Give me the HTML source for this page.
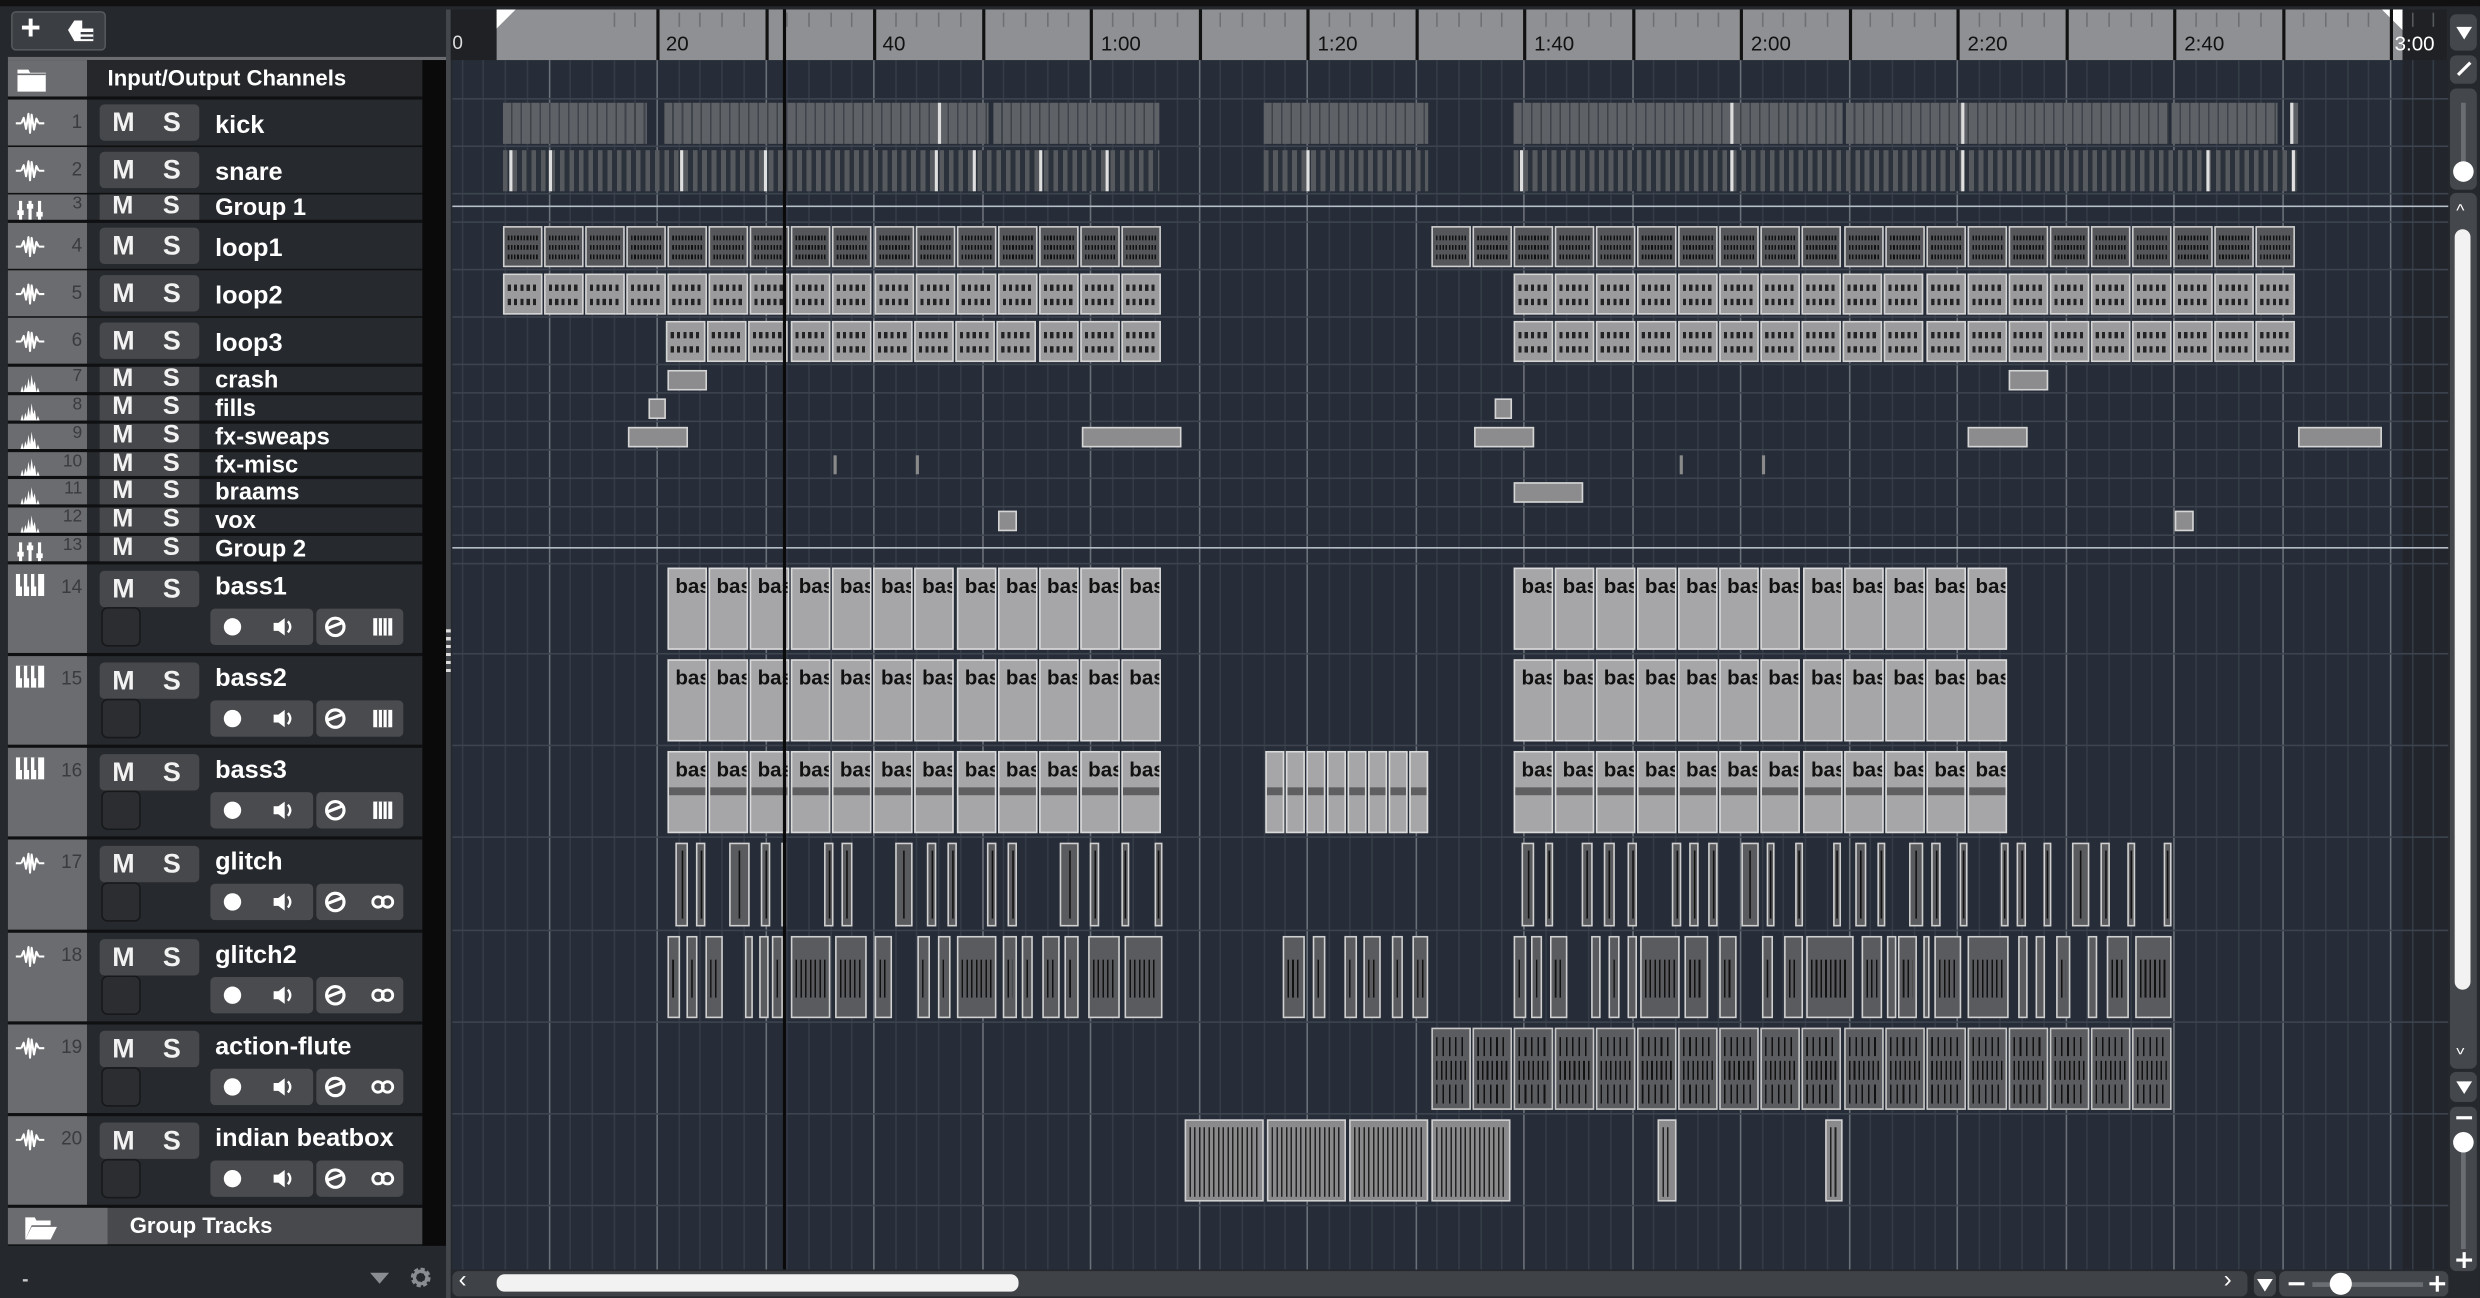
<!DOCTYPE html>
<html><head><meta charset="utf-8">
<style>
html,body{margin:0;padding:0;width:2480px;height:1298px;overflow:hidden;background:#1b1d20}
#s{position:absolute;left:0;top:0;width:1568px;height:821px;transform:scale(1.58163,1.58100);transform-origin:0 0;background:#25282c;font-family:"Liberation Sans",sans-serif;overflow:hidden}
.a{position:absolute}
.row{position:absolute;left:5px;width:262px;background:#26292d}
.row .ic{position:absolute;left:0;top:0;bottom:0;width:50px;background:#6b6c6f}
.row .n{position:absolute;left:0;width:47px;text-align:right;top:7px;font:12px "Liberation Sans",sans-serif;color:#3a3b3e}
.row svg.i{position:absolute;left:4px;top:7px}
.row .ms{position:absolute;left:58px;width:63px;top:3px;height:23px;background:#47484b;border-radius:3px;font:bold 17px "Liberation Sans",sans-serif;color:#f2f2f2}
.ms b{position:absolute;top:2px}.ms b:first-child{left:8px}.ms b+b{left:40px}
.row .nm{position:absolute;left:131px;top:8px;font:bold 16px "Liberation Sans",sans-serif;color:#fff;white-space:nowrap}
.s .ms{top:0;height:16px;font-size:16px;border-radius:0}.s .ms b{top:-1px}
.s .nm{top:0;font-size:15px}.s .n{top:0;font-size:11px}.s svg.i{top:auto;bottom:0}
.B .ms{top:4px}.B .nm{top:6px}
.B .sq{position:absolute;left:59px;top:27px;width:23px;height:23px;border:1px solid #17181a;background:#2b2d31;border-radius:4px}
.B .g1{position:absolute;left:128px;top:28px;width:65px;height:23px;background:#4a4b4e;border-radius:3px}
.B .g2{position:absolute;left:195px;top:28px;width:55px;height:23px;background:#4a4b4e;border-radius:3px}
.g1 svg,.g2 svg{position:absolute;top:4px}
.btn{position:absolute;background:#44474b;border-radius:4px}
</style></head><body>
<div id="s">
<svg width="0" height="0" style="position:absolute">
<defs>
<symbol id="wv" viewBox="0 0 20 16"><path d="M1 8H4.5M15.5 8H19M4.5 8L6 4.5L7.5 11.5L9 2L10 14L11 2.5L12.5 12L14 5L15.5 8" stroke="#fff" stroke-width="1.3" fill="none" stroke-linejoin="round"/></symbol>
<symbol id="mt" viewBox="0 0 20 12"><path d="M1 12L4 12L5 8L6 12L7 7L8 10L9 3L10 9L11 1L12 8L13 5L14 12L15 9L16 12L19 12Z" fill="#fff"/></symbol>
<symbol id="gp" viewBox="0 0 20 12"><path d="M4 0V12M10 0V12M16 0V12" stroke="#fff" stroke-width="2"/><rect x="2" y="6" width="4" height="3" fill="#fff"/><rect x="8" y="2" width="4" height="3" fill="#fff"/><rect x="14" y="7" width="4" height="3" fill="#fff"/></symbol>
<symbol id="pn" viewBox="0 0 18 14"><rect width="18" height="14" fill="#fff"/><path d="M4.5 0V14M9 0V14M13.5 0V14" stroke="#6b6c6f" stroke-width="1.2"/><path d="M3.5 0V8M8 0V8M12.5 0V8" stroke="#6b6c6f" stroke-width="1.6"/></symbol>
<symbol id="g1i" viewBox="0 0 65 15"><circle cx="14" cy="7.5" r="5.5" fill="#fff"/><path d="M40 5H43L47 2V13L43 10H40Z" fill="#fff"/><path d="M49 4Q52 7.5 49 11" stroke="#fff" stroke-width="1.5" fill="none"/></symbol>
<symbol id="g2p" viewBox="0 0 55 15"><circle cx="12" cy="7.5" r="5.5" stroke="#fff" stroke-width="2" fill="none"/><path d="M7 8.5L16 5" stroke="#fff" stroke-width="2"/><rect x="36" y="2" width="12" height="11" fill="#fff"/><path d="M39 2V13M42 2V13M45 2V13" stroke="#4a4b4e" stroke-width="1"/></symbol>
<symbol id="g2l" viewBox="0 0 55 15"><circle cx="12" cy="7.5" r="5.5" stroke="#fff" stroke-width="2" fill="none"/><path d="M7 8.5L16 5" stroke="#fff" stroke-width="2"/><circle cx="39" cy="7.5" r="3.3" stroke="#fff" stroke-width="1.8" fill="none"/><circle cx="45" cy="7.5" r="3.3" stroke="#fff" stroke-width="1.8" fill="none"/></symbol>
</defs></svg>

<div class="a" style="left:0;top:0;width:1568px;height:4px;background:#111"></div>
<div class="a" style="left:7px;top:7px;width:58px;height:23px;background:#3b3e42;border:1px solid #55585c;border-radius:3px;color:#fff;font:bold 22px 'Liberation Sans',sans-serif"><span class="a" style="left:5px;top:-3px">+</span>
<svg class="a" style="left:34px;top:4px" width="18" height="15"><path d="M5 1H10V6H17V14H5L1 7Z" fill="#fff"/><path d="M9 9H17M9 12H17" stroke="#3b3e42" stroke-width="1.5"/></svg></div>
<div class="a" style="left:5px;top:36px;width:278px;height:2px;background:#6b6c6f"></div>

<div class="a" style="left:5px;top:38px;width:262px;height:750px;background:#0f1011"></div>
<div class="a" style="left:267px;top:38px;width:15px;height:750px;background:#0a0a0b"></div>
<div class="a" style="left:282px;top:6px;width:3px;height:815px;background:#44474c"></div>
<div class="a" style="left:282px;top:398px;width:3px;height:28px;background:repeating-linear-gradient(#ddd 0 2px,transparent 2px 5px)"></div>

<div class="row" style="top:38px;height:23px;background:#25272b"><div class="ic"></div>
<svg class="a" style="left:6px;top:4px" width="18" height="16"><path d="M0 2H7L8 4H18V16H0Z" fill="#fff"/><path d="M0 5H18" stroke="#6b6c6f"/></svg>
<div class="nm" style="left:63px;top:3px;font-size:14px">Input/Output Channels</div></div>

<div class="row" style="top:63px;height:29px"><div class="ic"></div><svg class="i" width="20" height="16"><use href="#wv"/></svg><div class="n">1</div><div class="ms"><b>M</b><b>S</b></div><div class="nm">kick</div></div>
<div class="row" style="top:93px;height:29px"><div class="ic"></div><svg class="i" width="20" height="16"><use href="#wv"/></svg><div class="n">2</div><div class="ms"><b>M</b><b>S</b></div><div class="nm">snare</div></div>
<div class="row s" style="top:123px;height:16px"><div class="ic"></div><svg class="i" width="20" height="12"><use href="#gp"/></svg><div class="n">3</div><div class="ms"><b>M</b><b>S</b></div><div class="nm">Group 1</div></div>
<div class="row" style="top:141px;height:29px"><div class="ic"></div><svg class="i" width="20" height="16"><use href="#wv"/></svg><div class="n">4</div><div class="ms"><b>M</b><b>S</b></div><div class="nm">loop1</div></div>
<div class="row" style="top:171px;height:29px"><div class="ic"></div><svg class="i" width="20" height="16"><use href="#wv"/></svg><div class="n">5</div><div class="ms"><b>M</b><b>S</b></div><div class="nm">loop2</div></div>
<div class="row" style="top:201px;height:29px"><div class="ic"></div><svg class="i" width="20" height="16"><use href="#wv"/></svg><div class="n">6</div><div class="ms"><b>M</b><b>S</b></div><div class="nm">loop3</div></div>
<div class="row s" style="top:232px;height:16px"><div class="ic"></div><svg class="i" width="20" height="12"><use href="#mt"/></svg><div class="n">7</div><div class="ms"><b>M</b><b>S</b></div><div class="nm">crash</div></div>
<div class="row s" style="top:250px;height:16px"><div class="ic"></div><svg class="i" width="20" height="12"><use href="#mt"/></svg><div class="n">8</div><div class="ms"><b>M</b><b>S</b></div><div class="nm">fills</div></div>
<div class="row s" style="top:268px;height:16px"><div class="ic"></div><svg class="i" width="20" height="12"><use href="#mt"/></svg><div class="n">9</div><div class="ms"><b>M</b><b>S</b></div><div class="nm">fx-sweaps</div></div>
<div class="row s" style="top:286px;height:15px"><div class="ic"></div><svg class="i" width="20" height="12"><use href="#mt"/></svg><div class="n">10</div><div class="ms" style="height:15px"><b>M</b><b>S</b></div><div class="nm">fx-misc</div></div>
<div class="row s" style="top:303px;height:16px"><div class="ic"></div><svg class="i" width="20" height="12"><use href="#mt"/></svg><div class="n">11</div><div class="ms"><b>M</b><b>S</b></div><div class="nm">braams</div></div>
<div class="row s" style="top:321px;height:16px"><div class="ic"></div><svg class="i" width="20" height="12"><use href="#mt"/></svg><div class="n">12</div><div class="ms"><b>M</b><b>S</b></div><div class="nm">vox</div></div>
<div class="row s" style="top:339px;height:16px"><div class="ic"></div><svg class="i" width="20" height="12"><use href="#gp"/></svg><div class="n">13</div><div class="ms"><b>M</b><b>S</b></div><div class="nm">Group 2</div></div>

<div class="row B" style="top:357px;height:56px"><div class="ic"></div><svg class="i" width="18" height="14" style="top:6px;left:5px"><use href="#pn"/></svg><div class="n">14</div><div class="ms"><b>M</b><b>S</b></div><div class="nm">bass1</div><div class="sq"></div><div class="g1"><svg width="65" height="15"><use href="#g1i"/></svg></div><div class="g2"><svg width="55" height="15"><use href="#g2p"/></svg></div></div>
<div class="row B" style="top:415px;height:56px"><div class="ic"></div><svg class="i" width="18" height="14" style="top:6px;left:5px"><use href="#pn"/></svg><div class="n">15</div><div class="ms"><b>M</b><b>S</b></div><div class="nm">bass2</div><div class="sq"></div><div class="g1"><svg width="65" height="15"><use href="#g1i"/></svg></div><div class="g2"><svg width="55" height="15"><use href="#g2p"/></svg></div></div>
<div class="row B" style="top:473px;height:56px"><div class="ic"></div><svg class="i" width="18" height="14" style="top:6px;left:5px"><use href="#pn"/></svg><div class="n">16</div><div class="ms"><b>M</b><b>S</b></div><div class="nm">bass3</div><div class="sq"></div><div class="g1"><svg width="65" height="15"><use href="#g1i"/></svg></div><div class="g2"><svg width="55" height="15"><use href="#g2p"/></svg></div></div>
<div class="row B" style="top:531px;height:57px"><div class="ic"></div><svg class="i" width="20" height="16"><use href="#wv"/></svg><div class="n">17</div><div class="ms"><b>M</b><b>S</b></div><div class="nm">glitch</div><div class="sq"></div><div class="g1"><svg width="65" height="15"><use href="#g1i"/></svg></div><div class="g2"><svg width="55" height="15"><use href="#g2l"/></svg></div></div>
<div class="row B" style="top:590px;height:56px"><div class="ic"></div><svg class="i" width="20" height="16"><use href="#wv"/></svg><div class="n">18</div><div class="ms"><b>M</b><b>S</b></div><div class="nm">glitch2</div><div class="sq"></div><div class="g1"><svg width="65" height="15"><use href="#g1i"/></svg></div><div class="g2"><svg width="55" height="15"><use href="#g2l"/></svg></div></div>
<div class="row B" style="top:648px;height:56px"><div class="ic"></div><svg class="i" width="20" height="16"><use href="#wv"/></svg><div class="n">19</div><div class="ms"><b>M</b><b>S</b></div><div class="nm">action-flute</div><div class="sq"></div><div class="g1"><svg width="65" height="15"><use href="#g1i"/></svg></div><div class="g2"><svg width="55" height="15"><use href="#g2l"/></svg></div></div>
<div class="row B" style="top:706px;height:56px"><div class="ic"></div><svg class="i" width="20" height="16"><use href="#wv"/></svg><div class="n">20</div><div class="ms"><b>M</b><b>S</b></div><div class="nm">indian beatbox</div><div class="sq"></div><div class="g1"><svg width="65" height="15"><use href="#g1i"/></svg></div><div class="g2"><svg width="55" height="15"><use href="#g2l"/></svg></div></div>

<div class="row" style="top:764px;height:23px;background:#47494c"><div class="ic" style="width:63px"></div>
<svg class="a" style="left:10px;top:4px" width="22" height="16"><path d="M1 2H7L8 4H17V7H5L1 16Z" fill="#fff"/><path d="M5 8H21L17 16H1Z" fill="#fff"/></svg>
<div class="nm" style="left:77px;top:3px;font-size:14px">Group Tracks</div></div>

<div class="a" style="left:14px;top:802px;color:#ccc;font:bold 12px 'Liberation Sans',sans-serif">-</div>
<div class="a" style="left:234px;top:805px;width:0;height:0;border-left:6px solid transparent;border-right:6px solid transparent;border-top:7px solid #8a8d91"></div>
<svg class="a" style="left:259px;top:801px" width="14" height="14"><circle cx="7" cy="7" r="4.5" fill="none" stroke="#8a8d91" stroke-width="3.5" stroke-dasharray="2.2 1.3"/><circle cx="7" cy="7" r="4" fill="none" stroke="#8a8d91" stroke-width="2"/></svg>

<div class="a" style="left:286px;top:38px;width:1262px;height:765px;background:#262d38"></div>
<div class="a" style="left:1519px;top:38px;width:29px;height:765px;background:#22262c"></div>
<div class="a" style="left:285px;top:6px;width:1262px;height:32px;background:#1f2124"></div>
<div class="a" style="left:314px;top:6px;width:1205px;height:32px;background:#8e9094"></div>
<div class="a" style="left:314px;top:6px;width:0;height:0;border-top:12px solid #fff;border-right:12px solid transparent"></div>
<div class="a" style="left:1506px;top:6px;width:0;height:0;border-top:13px solid #fff;border-left:13px solid transparent"></div>
<div id="clips"></div>
<div class="a" style="left:286px;top:20px;font:12px 'Liberation Sans',sans-serif;color:#ddd">0</div>
<div class="a" style="left:421px;top:20px;font:13px 'Liberation Sans',sans-serif;color:#111">20</div>
<div class="a" style="left:558px;top:20px;font:13px 'Liberation Sans',sans-serif;color:#111">40</div>
<div class="a" style="left:696px;top:20px;font:13px 'Liberation Sans',sans-serif;color:#111">1:00</div>
<div class="a" style="left:833px;top:20px;font:13px 'Liberation Sans',sans-serif;color:#111">1:20</div>
<div class="a" style="left:970px;top:20px;font:13px 'Liberation Sans',sans-serif;color:#111">1:40</div>
<div class="a" style="left:1107px;top:20px;font:13px 'Liberation Sans',sans-serif;color:#111">2:00</div>
<div class="a" style="left:1244px;top:20px;font:13px 'Liberation Sans',sans-serif;color:#111">2:20</div>
<div class="a" style="left:1381px;top:20px;font:13px 'Liberation Sans',sans-serif;color:#111">2:40</div>
<div class="a" style="left:1514px;top:20px;font:13px 'Liberation Sans',sans-serif;color:#fff">3:00</div>

<div class="a" style="left:1548px;top:4px;width:20px;height:817px;background:#25282c"></div>
<div class="btn" style="left:1549px;top:9px;width:17px;height:23px"></div>
<div class="a" style="left:1553px;top:17px;border-left:5px solid transparent;border-right:5px solid transparent;border-top:8px solid #fff"></div>
<div class="btn" style="left:1549px;top:35px;width:17px;height:18px"></div>
<div class="a" style="left:1557px;top:38px;width:2px;height:11px;background:#fff;transform:rotate(45deg)"></div>
<div class="btn" style="left:1549px;top:56px;width:17px;height:64px"></div>
<div class="a" style="left:1556px;top:65px;width:3px;height:42px;background:#6a6d72"></div>
<div class="a" style="left:1551px;top:102px;width:13px;height:13px;border-radius:50%;background:#fff"></div>
<div class="btn" style="left:1549px;top:122px;width:17px;height:554px"></div>
<div class="a" style="left:1553px;top:128px;color:#fff;font:11px 'Liberation Sans',sans-serif">^</div>
<div class="a" style="left:1552px;top:145px;width:10px;height:481px;background:#f2f2f2;border-radius:5px"></div>
<div class="a" style="left:1553px;top:656px;color:#fff;font:11px 'Liberation Sans',sans-serif;transform:scaleY(-1)">^</div>
<div class="btn" style="left:1549px;top:678px;width:17px;height:19px"></div>
<div class="a" style="left:1553px;top:684px;border-left:5px solid transparent;border-right:5px solid transparent;border-top:8px solid #fff"></div>
<div class="btn" style="left:1549px;top:700px;width:17px;height:104px"></div>
<div class="a" style="left:1553px;top:706px;width:10px;height:2px;background:#fff"></div>
<div class="a" style="left:1556px;top:720px;width:3px;height:70px;background:#6a6d72"></div>
<div class="a" style="left:1551px;top:716px;width:13px;height:13px;border-radius:50%;background:#fff"></div>
<div class="a" style="left:1553px;top:796px;width:10px;height:2px;background:#fff"></div>
<div class="a" style="left:1557px;top:792px;width:2px;height:10px;background:#fff"></div>

<div class="a" style="left:285px;top:803px;width:1263px;height:18px;background:#25282c"></div>
<div class="btn" style="left:286px;top:804px;width:1135px;height:16px;background:#3f4246"></div>
<div class="a" style="left:290px;top:801px;color:#fff;font:15px 'Liberation Sans',sans-serif">&lsaquo;</div>
<div class="a" style="left:314px;top:806px;width:330px;height:11px;border-radius:5px;background:#f2f2f2"></div>
<div class="a" style="left:1406px;top:801px;color:#fff;font:15px 'Liberation Sans',sans-serif">&rsaquo;</div>
<div class="btn" style="left:1425px;top:804px;width:14px;height:16px"></div>
<div class="a" style="left:1427px;top:809px;border-left:5px solid transparent;border-right:5px solid transparent;border-top:8px solid #fff"></div>
<div class="btn" style="left:1441px;top:804px;width:107px;height:16px"></div>
<div class="a" style="left:1447px;top:811px;width:10px;height:2px;background:#fff"></div>
<div class="a" style="left:1462px;top:811px;width:70px;height:3px;background:#6a6d72"></div>
<div class="a" style="left:1473px;top:805px;width:14px;height:14px;border-radius:50%;background:#fff"></div>
<div class="a" style="left:1536px;top:811px;width:10px;height:2px;background:#fff"></div>
<div class="a" style="left:1540px;top:807px;width:2px;height:10px;background:#fff"></div>
</div>

<script>
const C=document.getElementById('clips');
function bx(x,y,w,h,s,t){const d=document.createElement('div');d.className='a';d.style.cssText='left:'+x+'px;top:'+y+'px;width:'+w+'px;height:'+h+'px;box-sizing:border-box;'+s;if(t)d.textContent=t;C.appendChild(d);return d;}
for(let i=-10;i<100;i++){const x=415+i*13.7;if(x<286||x>1548)continue;bx(Math.round(x),38,1,765,'background:'+(i%5==0?'#6b7078':'#353c47'));}
[62,92,122,140,170,200,230,248,266,284,302,320,338,356,413,471,529,588,646,704,762].forEach(y=>bx(286,y,1262,1,'background:#3d444f'));
[130,346].forEach(y=>bx(286,y,1262,1,'background:#b7bfc9'));
for(let i=-2;i<90;i++){const x=Math.round(415+i*13.7);if(x<287||x>1546)continue;
 if(i%5==0)bx(x,6,2,32,'background:#111');else bx(x,8,1,9,'background:'+(x>314&&x<1519?'#6e7074':'#55585c'));}
[[318,409],[420,625],[628,733],[799,903],[957,1165],[1167,1371],[1373,1440]].forEach(([a,b])=>bx(a,65,b-a,26,'background:repeating-linear-gradient(90deg,#5e6166 0 5px,#3f444b 5px 6px)'));
bx(1448,65,5,26,'background:#5e6166;border-left:2px solid #ddd');
[593,1094,1240].forEach(x=>bx(x,65,2,26,'background:#ddd'));
[[318,733],[799,903],[957,1453]].forEach(([a,b])=>bx(a,95,b-a,26,'background:repeating-linear-gradient(90deg,#565a5f 0 3px,#2c323b 3px 6px)'));
[322,347,430,483,591,615,657,699,826,961,1094,1240,1395,1449].forEach(x=>bx(x,95,2,26,'background:#e0e0e0'));
function seq(a,n,w,y,h,s,t){for(let i=0;i<n;i++)bx(Math.round(a+i*w),y,Math.round(w)-1,h,s,t);}
const L1='border:1px solid #cfcfcf;background:repeating-linear-gradient(90deg,#111 0 1px,transparent 1px 2px) 2px 5px/calc(100% - 4px) 3px no-repeat,repeating-linear-gradient(90deg,#111 0 1px,transparent 1px 2px) 2px 11px/calc(100% - 4px) 3px no-repeat,repeating-linear-gradient(90deg,#111 0 1px,transparent 1px 2px) 2px 17px/calc(100% - 4px) 3px no-repeat,#55565a';
const L2='border:1px solid #d4d4d4;background:repeating-linear-gradient(90deg,#222 0 2px,transparent 2px 4px) 2px 6px/calc(100% - 4px) 4px no-repeat,repeating-linear-gradient(90deg,#222 0 2px,transparent 2px 4px) 2px 15px/calc(100% - 4px) 4px no-repeat,#9b9b9d';
seq(318,16,26.06,143,26,L1);seq(905,21,26.05,143,26,L1);
seq(318,16,26.06,173,26,L2);seq(957,19,26.05,173,26,L2);
seq(421,12,26.17,203,26,L2);seq(957,19,26.05,203,26,L2);
const S='border:1px solid #d5d5d5;background:#8c8c8e';
bx(422,234,25,13,S);bx(1270,234,25,13,S);bx(410,252,11,13,S);bx(945,252,11,13,S);
[[397,38],[684,63],[932,38],[1244,38],[1453,53]].forEach(([a,w])=>bx(a,270,w,13,S));
[527,579,1062,1114].forEach(x=>bx(x,288,2,12,'background:#8a8a8a'));
bx(957,305,44,13,S);bx(631,323,12,13,S);bx(1375,323,12,13,S);
const BS='border:1px solid #dadada;background:#a6a6a8;font:bold 13px "Liberation Sans",sans-serif;color:#111;padding:3px 0 0 4px;overflow:hidden;white-space:nowrap;';
[359,417,475].forEach((y,k)=>{const st=BS+(k==2?'background:linear-gradient(#5f5f61,#5f5f61) 0 22px/100% 5px no-repeat,#a6a6a8;':'');seq(422,12,26.08,y,52,st,'bas');seq(957,12,26.08,y,52,st,'bas');});
seq(800,8,13,475,52,'border:1px solid #dadada;background:linear-gradient(#5f5f61,#5f5f61) 0 22px/100% 5px no-repeat,#a6a6a8');
const G='border:1px solid #d0d0d0;background:linear-gradient(#111,#111) 50% 4px/1px calc(100% - 8px) no-repeat,#5a5b5e';
[[427,435],[440,446],[461,474],[481,487],[494,497],[521,527],[532,539],[566,577],[586,592],[599,605],[624,630],[637,643],[670,682],[689,695],[709,714],[730,735],[962,970],[977,982],[1000,1007],[1014,1021],[1029,1035],[1057,1063],[1068,1074],[1080,1086],[1101,1112],[1117,1122],[1135,1140],[1159,1164],[1173,1180],[1187,1192],[1207,1216],[1221,1227],[1239,1244],[1265,1270],[1275,1281],[1292,1297],[1310,1321],[1328,1334],[1345,1350],[1368,1373]].forEach(([a,b])=>bx(a,533,b-a,53,G));
const G2='border:1px solid #d0d0d0;background:repeating-linear-gradient(90deg,#111 0 1px,transparent 1px 3px) 2px 14px/calc(100% - 4px) 24px no-repeat,#5a5b5e';
[[422,430],[434,441],[446,457],[471,476],[480,486],[488,495],[500,525],[528,548],[553,564],[580,588],[593,601],[605,630],[634,643],[646,653],[659,670],[673,682],[688,708],[711,735],[811,825],[830,838],[850,858],[862,873],[880,887],[893,903],[957,965],[968,975],[980,991],[1006,1012],[1017,1024],[1029,1035],[1037,1062],[1065,1080],[1087,1098],[1114,1121],[1128,1140],[1142,1172],[1177,1190],[1193,1199],[1200,1212],[1216,1220],[1223,1240],[1244,1270],[1276,1282],[1287,1293],[1300,1309],[1320,1326],[1332,1346],[1350,1373]].forEach(([a,b])=>bx(a,592,b-a,52,G2));
const F='border:1px solid #c8c8c8;background:repeating-linear-gradient(90deg,#111 0 1px,transparent 1px 4px) 2px 5px/calc(100% - 4px) 12px no-repeat,repeating-linear-gradient(90deg,#111 0 1px,transparent 1px 3px) 2px 20px/calc(100% - 4px) 12px no-repeat,repeating-linear-gradient(90deg,#111 0 1px,transparent 1px 4px) 2px 35px/calc(100% - 4px) 12px no-repeat,#5b5c5f';
seq(905,18,26.05,650,52,F);
const BB='border:1px solid #d0d0d0;background:repeating-linear-gradient(90deg,#222 0 1px,transparent 1px 3px) 2px 4px/calc(100% - 4px) 44px no-repeat,#8a8a8c';
[749,801,853,905].forEach(x=>bx(x,708,50,52,BB));bx(1048,708,12,52,BB);bx(1154,708,11,52,BB);
bx(495,6,2,797,'background:#0a0a0a');
</script>
</body></html>
